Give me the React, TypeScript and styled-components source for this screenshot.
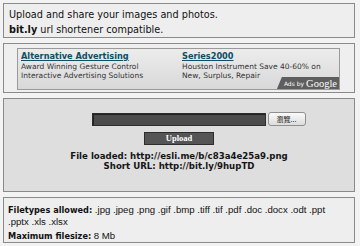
import styled, { createGlobalStyle } from "styled-components";

const GlobalStyle = createGlobalStyle`
  html, body {
    margin: 0;
    padding: 0;
    background: #f3f3f3;
  }
  body {
    font-family: "DejaVu Sans", Verdana, sans-serif;
    color: #111;
  }
`;

const Page = styled.div`
  width: 360px;
  padding: 3px 5px 0 3px;
  box-sizing: border-box;
  display: flex;
  flex-direction: column;
  gap: 5px;
`;

const Panel = styled.div<{ $bg?: string }>`
  border: 1px solid #8a8a8a;
  background: ${(p) => p.$bg || "#eeeeee"};
  box-sizing: border-box;
`;

const Intro = styled(Panel)`
  height: 35px;
  padding: 3px 0 0 5px;
  font-size: 9.7px;
  line-height: 15px;
`;

const AdsOuter = styled(Panel)`
  height: 50px;
  padding: 4px 14px 2px 13px;
  background: #efefef;
`;

const AdsInner = styled.div`
  position: relative;
  height: 42px;
  border: 1px solid #9a9a9a;
  background: linear-gradient(#ececec, #d8d8d8);
  display: grid;
  grid-template-columns: 161px 1fr;
  padding: 1px 0 0 3px;
  box-sizing: border-box;
`;

const Ad = styled.div`
  display: flex;
  flex-direction: column;
  font-size: 7.5px;
  line-height: 9px;
  color: #333;
`;

const AdTitle = styled.a`
  font-weight: bold;
  font-size: 8.2px;
  line-height: 12px;
  color: #0d4f63;
  text-decoration: underline;
`;

const AdsBadge = styled.div`
  position: absolute;
  right: 0;
  bottom: 0;
  background: #5e5e5e;
  color: #fff;
  height: 12px;
  padding: 0 2px 0 7px;
  display: flex;
  align-items: center;
  gap: 2px;
  font-size: 6px;
  clip-path: polygon(5px 0, 100% 0, 100% 100%, 0 100%);
`;

const GoogleWord = styled.span`
  font-family: "Liberation Serif", "Times New Roman", serif;
  font-size: 10.5px;
`;

const UploadPanel = styled(Panel)`
  height: 94px;
  background: #dedede;
  display: flex;
  flex-direction: column;
  align-items: center;
  padding-top: 13px;
`;

const FileRow = styled.div`
  display: flex;
  align-items: center;
  gap: 2px;
  margin-left: 39px;
`;

const FileField = styled.div`
  width: 172px;
  height: 11px;
  background: #4c4c4c;
  border: 1px solid #2e2e2e;
  box-shadow: inset 1px 1px 0 #222;
`;

const BrowseButton = styled.button`
  width: 38px;
  height: 14px;
  padding: 0;
  border: 1px solid #8f8f8f;
  border-radius: 3px;
  background: linear-gradient(#fafafa, #dcdcdc);
  font-family: "Noto Sans CJK TC", sans-serif;
  font-size: 7px;
  line-height: 12px;
  color: #111;
`;

const UploadButton = styled.button`
  margin-top: 6px;
  width: 70px;
  height: 13px;
  padding: 0;
  border: 1px solid #2d2d2d;
  background: #555555;
  color: #fff;
  font-family: "Liberation Serif", serif;
  font-weight: bold;
  font-size: 8.5px;
  line-height: 11px;
`;

const Result = styled.div`
  margin-top: 6px;
  font-size: 8.6px;
  font-weight: bold;
  line-height: 10px;
  color: #151515;
  text-align: center;
  & + & {
    margin-top: 0;
  }
`;

const InfoPanel = styled(Panel)`
  height: 46px;
  padding: 6px 0 0 4px;
  font-family: "Liberation Sans", Arial, sans-serif;
  font-size: 9.6px;
  line-height: 11px;
`;

const InfoLine = styled.div<{ $gap?: number }>`
  margin-top: ${(p) => p.$gap || 0}px;
`;

const Label = styled.b`
  font-family: "DejaVu Sans", Verdana, sans-serif;
  font-weight: bold;
  font-size: 8.2px;
`;

export default function App() {
  return (
    <>
      <GlobalStyle />
      <Page>
        <Intro>
          Upload and share your images and photos.
          <br />
          <b>bit.ly</b> url shortener compatible.
        </Intro>

        <AdsOuter>
          <AdsInner>
            <Ad>
              <AdTitle>Alternative Advertising</AdTitle>
              <span>Award Winning Gesture Control</span>
              <span>Interactive Advertising Solutions</span>
            </Ad>
            <Ad>
              <AdTitle>Series2000</AdTitle>
              <span>Houston Instrument Save 40-60% on</span>
              <span>New, Surplus, Repair</span>
            </Ad>
            <AdsBadge>
              Ads by <GoogleWord>Google</GoogleWord>
            </AdsBadge>
          </AdsInner>
        </AdsOuter>

        <UploadPanel>
          <FileRow>
            <FileField />
            <BrowseButton>瀏覽...</BrowseButton>
          </FileRow>
          <UploadButton>Upload</UploadButton>
          <Result>File loaded: http://esli.me/b/c83a4e25a9.png</Result>
          <Result>Short URL: http://bit.ly/9hupTD</Result>
        </UploadPanel>

        <InfoPanel>
          <InfoLine>
            <Label>Filetypes allowed:</Label> .jpg .jpeg .png .gif .bmp .tiff .tif .pdf .doc .docx .odt .ppt
            <br />
            .pptx .xls .xlsx
          </InfoLine>
          <InfoLine $gap={3}>
            <Label>Maximum filesize:</Label> 8 Mb
          </InfoLine>
        </InfoPanel>
      </Page>
    </>
  );
}
